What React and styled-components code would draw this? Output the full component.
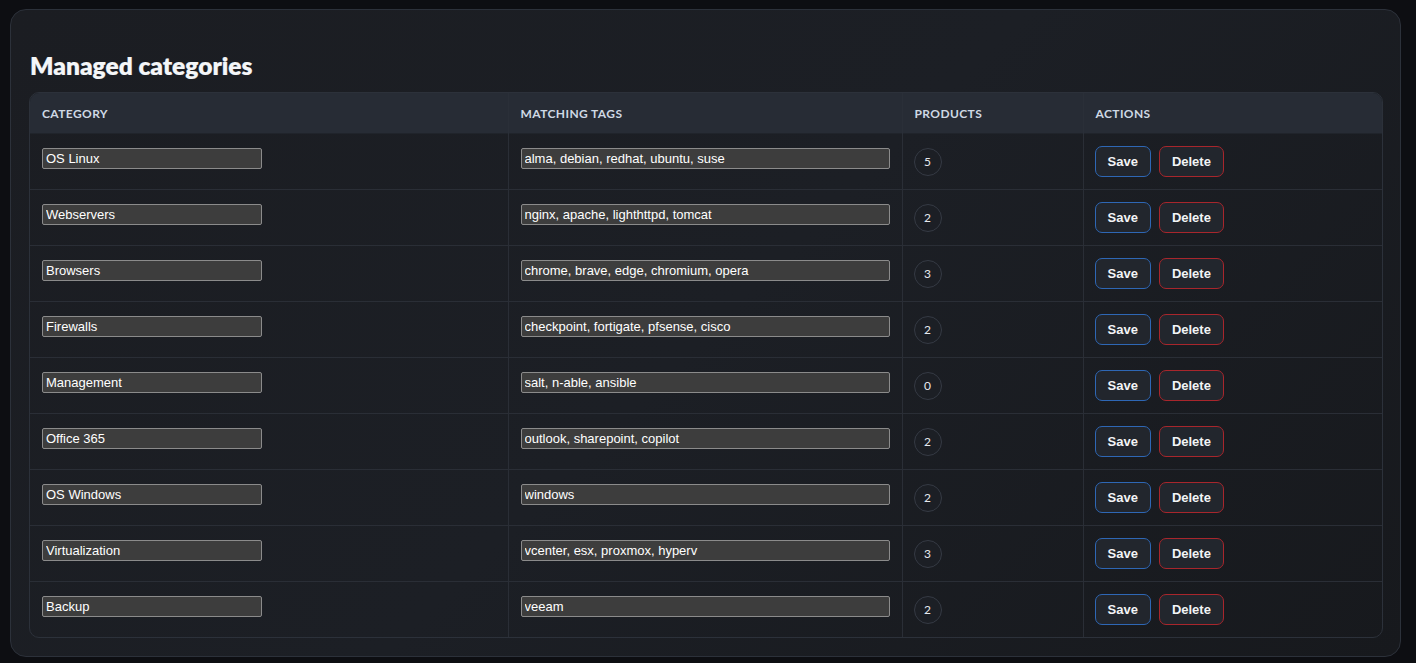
import React from 'react';
import styled, { createGlobalStyle } from 'styled-components';

const GlobalStyle = createGlobalStyle`
  html, body {
    margin: 0;
    background: #0d0e12;
    font-family: Lato, "Noto Sans", sans-serif;
    color: #e6e9ee;
  }
`;

const Page = styled.div`
  padding: 9px 15px 6px 10px;
  box-sizing: border-box;
  height: 663px;
`;

const Card = styled.section`
  border: 1px solid #2c313a;
  border-radius: 16px;
  background: linear-gradient(135deg, #1b1d22 0%, #1c1f25 50%, #17191d 100%);
  padding: 39px 17px 18px 18px;
  box-sizing: border-box;
  height: 648px;
`;

const Title = styled.h2`
  margin: 0 0 9px 1px;
  font-size: 24.5px;
  font-weight: 800;
  line-height: 34px;
  color: #f4f6f8;
  -webkit-text-stroke: 0.2px #f4f6f8;
`;

const TableWrap = styled.div`
  border: 1px solid #2c313a;
  border-radius: 10px;
  overflow: hidden;
`;

const Table = styled.table`
  width: 100%;
  border-collapse: collapse;
  table-layout: fixed;
`;

const Th = styled.th`
  background: #272c35;
  color: #cfd9e4;
  text-align: left;
  font-size: 12px;
  font-weight: 700;
  letter-spacing: 0.4px;
  text-transform: uppercase;
  height: 40px;
  padding: 0 12px;
  border-left: 1px solid #2a2f38;
  &:first-child { border-left: none; }
`;

const Tr = styled.tr`
  border-top: 1px solid #2a2e36;
  &:first-child { border-top: 1px solid #20242b; }
`;

const Td = styled.td`
  height: 55px;
  padding: 0 12px;
  border-left: 1px solid #2a2e36;
  &:first-child { border-left: none; }
`;

const TextInput = styled.input`
  box-sizing: border-box;
  width: ${p => p.$wide ? '100%' : '220px'};
  height: 21px;
  margin: 0 0 6px 0;
  padding: 1px 3px;
  display: block;
  background: #3d3d3d;
  border: 1px solid #8b8b8b;
  border-radius: 2px;
  color: #ffffff;
  font-family: "Liberation Sans", Arial, sans-serif;
  font-size: 13px;
  outline: none;
`;

const Count = styled.span`
  display: inline-flex;
  align-items: center;
  justify-content: center;
  width: 28px;
  height: 28px;
  margin-left: -1px;
  border: 1px solid #353a44;
  border-radius: 50%;
  box-sizing: border-box;
  font-size: 12px;
  color: #e6e9ee;
  background: #1c1f25;
`;

const Actions = styled.div`
  display: flex;
  gap: 8px;
  margin-left: -1px;
`;

const Button = styled.button`
  height: 31px;
  padding: 0 12px;
  border-radius: 7px;
  border: 1px solid ${p => p.$danger ? '#a8262c' : '#2e67b5'};
  background: #22262d;
  color: #f2f4f6;
  font-family: "Liberation Sans", Arial, sans-serif;
  font-size: 13px;
  font-weight: 700;
  cursor: pointer;
`;

const rows = [
  ['OS Linux', 'alma, debian, redhat, ubuntu, suse', 5],
  ['Webservers', 'nginx, apache, lighthttpd, tomcat', 2],
  ['Browsers', 'chrome, brave, edge, chromium, opera', 3],
  ['Firewalls', 'checkpoint, fortigate, pfsense, cisco', 2],
  ['Management', 'salt, n-able, ansible', 0],
  ['Office 365', 'outlook, sharepoint, copilot', 2],
  ['OS Windows', 'windows', 2],
  ['Virtualization', 'vcenter, esx, proxmox, hyperv', 3],
  ['Backup', 'veeam', 2],
];

export default function App() {
  return (
    <>
      <GlobalStyle />
      <Page>
        <Card>
          <Title>Managed categories</Title>
          <TableWrap>
            <Table>
              <colgroup>
                <col style={{ width: 478 }} />
                <col style={{ width: 394 }} />
                <col style={{ width: 181 }} />
                <col />
              </colgroup>
              <thead>
                <tr>
                  <Th>Category</Th>
                  <Th>Matching tags</Th>
                  <Th>Products</Th>
                  <Th>Actions</Th>
                </tr>
              </thead>
              <tbody>
                {rows.map(([name, tags, count]) => (
                  <Tr key={name}>
                    <Td><TextInput defaultValue={name} /></Td>
                    <Td><TextInput $wide defaultValue={tags} /></Td>
                    <Td><Count>{count}</Count></Td>
                    <Td>
                      <Actions>
                        <Button>Save</Button>
                        <Button $danger>Delete</Button>
                      </Actions>
                    </Td>
                  </Tr>
                ))}
              </tbody>
            </Table>
          </TableWrap>
        </Card>
      </Page>
    </>
  );
}
